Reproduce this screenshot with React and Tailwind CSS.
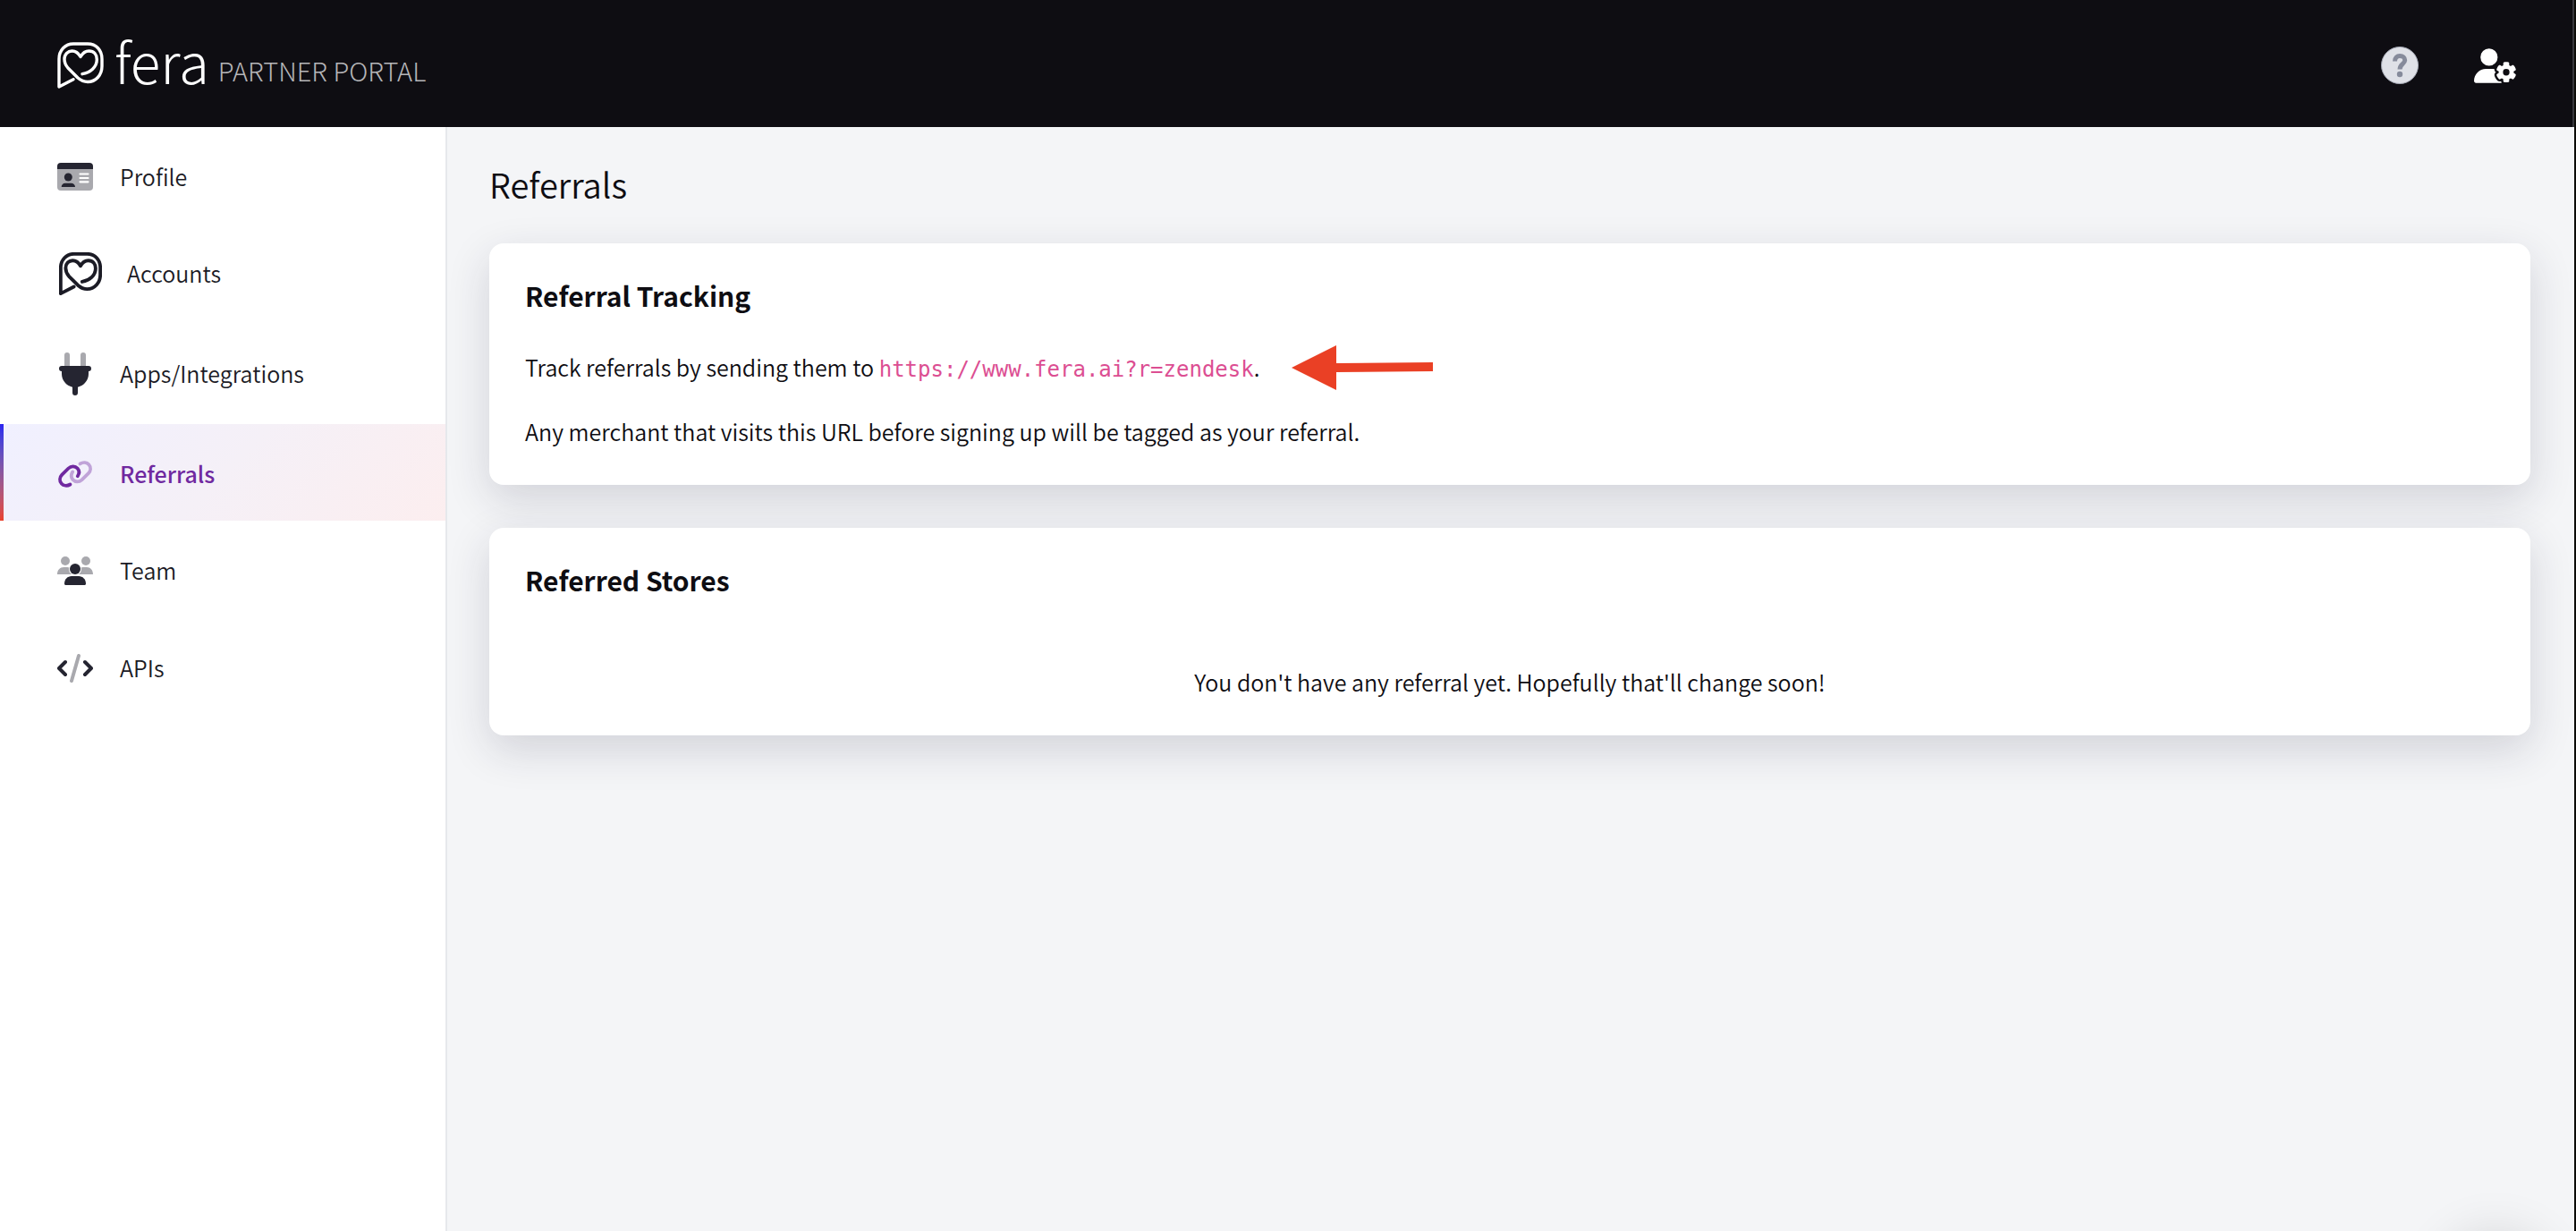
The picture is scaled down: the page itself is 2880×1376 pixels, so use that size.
import React from "react";
import { FaUserGear } from "react-icons/fa6";

const LogoMark = ({ className, strokeWidth }) => (
  <svg
    className={className}
    viewBox="0 0 52 52"
    fill="none"
    stroke="currentColor"
    strokeWidth={strokeWidth}
    strokeLinecap="round"
    strokeLinejoin="round"
    aria-hidden="true"
  >
    <path d="M18 41.7 L2 50 V19 C2 9 9 2 18 2 H34 C43.5 2 50 9 50 19 V27 C50 37 43 44.5 34 44.5 C29.5 44.5 26.5 43 23 40 L12 29 C9 25.5 8 22.5 8 19 C8 13.5 12 10 16.5 10 C20.5 10 23.5 12 26 16.5 C28.5 12 31.5 10 35.5 10 C41 10 44.3 14 44.3 19.5 C44.3 28 37 34 28 35.7" />
  </svg>
);

const ProfileIcon = () => (
  <svg className="w-10 h-10" viewBox="0 0 40 40" aria-hidden="true">
    <path fill="#a9a9ae" d="M0 11h40v20a4 4 0 0 1-4 4H4a4 4 0 0 1-4-4z" />
    <path fill="#252531" d="M4 4h32a4 4 0 0 1 4 4v3H0V8a4 4 0 0 1 4-4z" />
    <circle cx="12.3" cy="20" r="4.5" fill="#252531" />
    <path fill="#252531" d="M9 26.700h6.500c2.500 0 4.500 1.700 4.500 4.300H4.700c0-2.600 1.800-4.300 4.300-4.300z" />
    <path
      stroke="#fff"
      strokeWidth="2.200"
      strokeLinecap="round"
      d="M25.500 16.500h9M25.500 21h9M25.500 25.300h9"
    />
  </svg>
);

const PlugIcon = () => (
  <svg className="w-10 h-12" viewBox="0 0 40 48" aria-hidden="true">
    <path fill="#a9a9ae" d="M8 15V3a3 3 0 0 1 6 0v12zM26 15V3a3 3 0 0 1 6 0v12z" />
    <path
      fill="#252531"
      d="M5 15h30a3 3 0 0 1 0 6v3c0 7-5 13-12 14.700V45a3 3 0 0 1-6 0v-6.300C10 37 5 31 5 24v-3a3 3 0 0 1 0-6z"
    />
  </svg>
);

const LinkIcon = () => (
  <svg
    className="w-10 h-10"
    viewBox="0 0 40 40"
    fill="none"
    strokeWidth="3.800"
    strokeLinecap="round"
    aria-hidden="true"
  >
    <path
      stroke="#c0a3d8"
      d="M25.500 8.400C29 6.300 33 6.700 35.300 9.300C38 12.400 37.500 16.400 34.800 19.200L27.500 26.300C24.500 29 20 29 17.500 26.200C15.300 23.700 15.300 20.300 17.200 17.400"
    />
    <path
      stroke="#7029a0"
      d="M14.500 31.500C11 33.600 7 33 4.700 30.400C2.300 27.500 2.500 23.500 5.300 20.600L12.500 13.500C15.500 10.600 20 10.700 22.600 13.600C24.700 16 24.700 19.500 22.800 22.300"
    />
  </svg>
);

const TeamIcon = () => (
  <svg className="w-10 h-8" viewBox="0 0 40 32" aria-hidden="true">
    <g fill="#a9a9ae">
      <circle cx="9" cy="5" r="5" />
      <circle cx="32" cy="5" r="5" />
      <path d="M0 20c0-5 3-8 7.500-8h3.500c1.200 0 2.200.3 3 .7c-.6 2.800.3 5.400 2 7.300z" />
      <path d="M40 20c0-5-3-8-7-8h-4c-1.200 0-2.200.3-3 .7c.6 2.800-.3 5.400-2 7.300z" />
    </g>
    <circle cx="20" cy="14" r="7" fill="#fff" />
    <circle cx="20" cy="14" r="6" fill="#252531" />
    <path fill="#252531" d="M16 22h8c4.500 0 8 3.500 8 8.500c0 .9-.6 1.500-1.500 1.500h-21c-.9 0-1.500-.6-1.500-1.500c0-5 3.500-8.500 8-8.500z" />
  </svg>
);

const CodeIcon = () => (
  <svg
    className="w-10 h-8"
    viewBox="0 0 40 32"
    fill="none"
    strokeWidth="4"
    strokeLinecap="round"
    strokeLinejoin="round"
    aria-hidden="true"
  >
    <path stroke="#a9a9ae" d="M24 2L16 30" />
    <path stroke="#252531" d="M9 9L2 16l7 7M31 9l7 7l-7 7" />
  </svg>
);

const HelpIcon = () => (
  <svg className="w-[42px] h-[42px]" viewBox="0 0 42 42" aria-hidden="true">
    <circle cx="21" cy="21" r="20.500" fill="#dfe1e7" stroke="#a3a7b3" />
    <path
      fill="none"
      stroke="#868b9b"
      strokeWidth="5"
      d="M15.500 16.500C15.500 12.500 18 10.500 21 10.500C24.500 10.500 26.700 12.600 26.700 15.300C26.700 19.500 21 19.500 21 25.500"
    />
    <circle cx="21" cy="31" r="3.200" fill="#868b9b" />
  </svg>
);

const NAV_ITEMS = [
  { label: "Profile", icon: <ProfileIcon />, row: "h-[110px] pt-0.5 pl-16 gap-[30px]" },
  {
    label: "Accounts",
    icon: <LogoMark className="w-12 h-12" strokeWidth={4.2} />,
    row: "h-[108px] pl-[66px] gap-7",
  },
  { label: "Apps/Integrations", icon: <PlugIcon />, row: "h-[114px] pt-0.5 pl-16 gap-[30px]" },
  { label: "Referrals", icon: <LinkIcon />, row: "h-[108px] pt-1 pl-[60px] gap-[30px]", active: true },
  { label: "Team", icon: <TeamIcon />, row: "h-28 pl-16 gap-[30px]" },
  { label: "APIs", icon: <CodeIcon />, row: "h-[104px] pt-0.5 pl-16 gap-[30px]" },
];

const Header = () => (
  <header className="h-[142px] shrink-0 flex items-center justify-between pt-1 pl-16 pr-[62px] bg-[#0e0d12] border-r-2 border-[#37373c]">
    <a href="#home" className="flex items-center text-white">
      <LogoMark className="w-[52px] h-[52px] mr-3" strokeWidth={3.4} />
      <span className="pb-3 text-[62px] leading-[80px] font-light">fera</span>
      <span className="ml-2.5 pt-2.5 text-[29px] leading-10 font-light text-[#b5b5b8]">
        PARTNER PORTAL
      </span>
    </a>
    <div className="flex items-center gap-[62px]">
      <button type="button" aria-label="Help">
        <HelpIcon />
      </button>
      <button type="button" aria-label="Account settings" className="text-white">
        <FaUserGear className="w-12 h-[39px]" />
      </button>
    </div>
  </header>
);

const Sidebar = () => (
  <nav className="w-[500px] shrink-0 bg-white border-r-2 border-[#e6e8ec]">
    <ul>
      {NAV_ITEMS.map(({ label, icon, row, active }) => (
        <li key={label} className="flex">
          {active && <span className="w-1 bg-linear-to-b from-[#2b22f0] to-[#ea4029]" />}
          <a
            href="#nav"
            aria-current={active ? "page" : undefined}
            className={`flex flex-1 items-center text-[25px] ${row} ${
              active
                ? "font-medium text-[#7029a0] bg-linear-135 from-[#f0f0ff] via-[#f5f0f7] to-[#fceeef]"
                : "text-[#1b1b25] font-[350]"
            }`}
          >
            {icon}
            {label}
          </a>
        </li>
      ))}
    </ul>
  </nav>
);

const Card = ({ title, children }) => (
  <section className="px-10 pt-9 pb-10 bg-white rounded-2xl shadow-[0_16px_48px_rgba(30,28,60,0.16)]">
    <h2 className="text-[30px] leading-[44px] font-bold">{title}</h2>
    {children}
  </section>
);

const RedArrow = () => (
  <svg className="w-[158px] h-[50px] ml-9" viewBox="0 0 158 50" aria-hidden="true">
    <path fill="#ea4025" d="M0 25L50 0v20l108-1v10l-108 1v20z" />
  </svg>
);

const App = () => {
  return (
    <div className="min-h-screen flex flex-col bg-[#f4f5f7] text-[#0e0d12] border-r-2 border-[#0b0b08] font-['Noto_Sans_CJK_SC',sans-serif]">
      <Header />
      <div className="relative flex flex-1 overflow-hidden">
        <Sidebar />
        <main className="flex-1 pl-[47px] pr-[49px] pt-8">
          <h1 className="mb-[34px] text-[38px] leading-16 font-[350]">Referrals</h1>
          <div className="flex flex-col gap-12">
            <Card title="Referral Tracking">
              <div className="mt-6 h-[70px] flex items-center text-[25px] leading-10 font-[350]">
                <p>
                  Track referrals by sending them to{" "}
                  <code className="text-[24px] text-[#dc4e92] font-['DejaVu_Sans_Mono',monospace]">
                    https://www.fera.ai?r=zendesk
                  </code>
                  .
                </p>
                <RedArrow />
              </div>
              <p className="mt-4 text-[25px] leading-10 font-[350]">
                Any merchant that visits this URL before signing up will be tagged as your referral.
              </p>
            </Card>
            <Card title="Referred Stores">
              <p className="mt-[72px] text-center text-[25px] leading-10 font-[350]">
                You don't have any referral yet. Hopefully that'll change soon!
              </p>
            </Card>
          </div>
        </main>
        {/* Chat launcher sits just under the fold, only its shadow shows */}
        <div className="absolute right-7 -bottom-[124px] w-30 h-30 rounded-full shadow-[0_0_56px_rgba(0,0,0,0.14)]" />
      </div>
    </div>
  );
};

export default App;
